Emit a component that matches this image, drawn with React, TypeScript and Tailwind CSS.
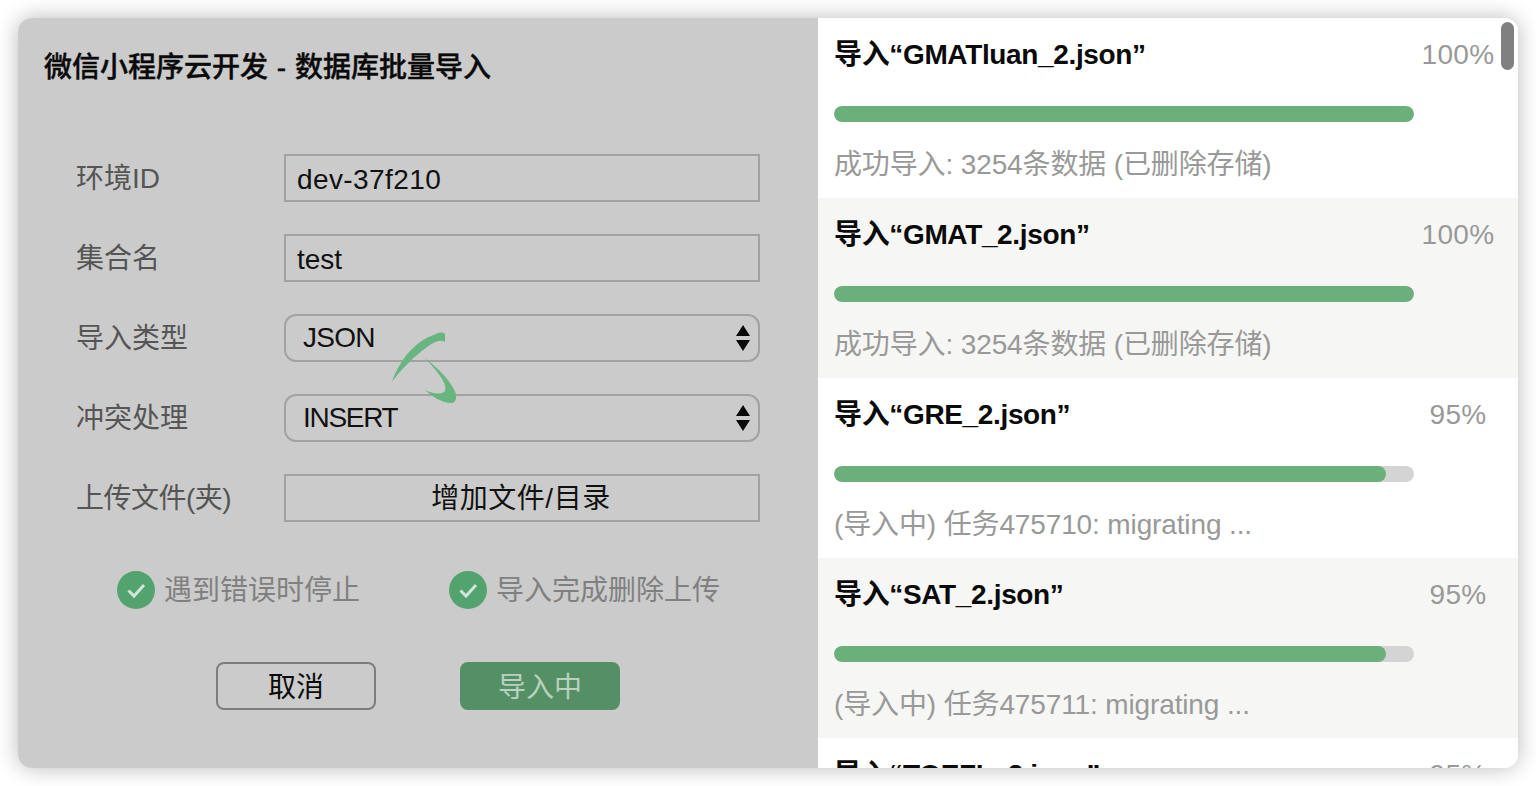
import React from "react";

const font = "font-['Liberation_Sans','Noto_Sans_CJK_SC',sans-serif]";

const rows = [
  { name: "导入“GMATluan_2.json”", pct: 100, sub: "成功导入: 3254条数据 (已删除存储)", alt: false },
  { name: "导入“GMAT_2.json”", pct: 100, sub: "成功导入: 3254条数据 (已删除存储)", alt: true },
  { name: "导入“GRE_2.json”", pct: 95.2, label: "95%", sub: "(导入中) 任务475710: migrating ...", alt: false },
  { name: "导入“SAT_2.json”", pct: 95.2, label: "95%", sub: "(导入中) 任务475711: migrating ...", alt: true },
  { name: "导入“TOEFL_2.json”", pct: 95.2, label: "95%", sub: "(导入中) 任务475712: migrating ...", alt: false },
];

function Label({ children, tight }: { children: React.ReactNode; tight?: boolean }) {
  return (
    <div className={`w-[266px] h-[48px] pl-[58px] text-[28px] leading-[50px] text-[#555555] shrink-0 ${tight ? "tracking-[-0.5px]" : ""}`}>
      {children}
    </div>
  );
}

function Arrows() {
  return (
    <svg width="14" height="26" viewBox="0 0 14 26" className="shrink-0">
      <path d="M7 0 L14 11 L0 11 Z M0 15 L14 15 L7 26 Z" fill="#0a0a0a" />
    </svg>
  );
}

function Check() {
  return (
    <svg width="38" height="38" viewBox="0 0 38 38" className="shrink-0">
      <circle cx="19" cy="19" r="19" fill="#53a36e" />
      <path d="M11.5 19.5 L17 25 L27 14" fill="none" stroke="#d4e4d8" strokeWidth="3" />
    </svg>
  );
}

export default function App() {
  return (
    <div className={`${font} w-[1536px] h-[786px] bg-white p-[18px] overflow-hidden`}>
      <div className="relative flex w-[1500px] h-[750px] rounded-[14px] overflow-hidden shadow-[0_0_22px_rgba(0,0,0,0.28)]">
        <div className="relative w-[800px] shrink-0 bg-[#cbcbcb]">
          <h1 className="pl-[26px] pt-[32px] text-[28px] leading-[36px] font-medium text-[#0a0a0a] [word-spacing:1px] [-webkit-text-stroke:0.4px_#0a0a0a]">
            微信小程序云开发 - 数据库批量导入
          </h1>

          <div className="mt-[68px] flex flex-col gap-[32px]">
            <div className="flex items-center">
              <Label>环境ID</Label>
              <input
                readOnly
                value="dev-37f210"
                className="w-[476px] h-[48px] border-2 border-[#a2a2a2] bg-transparent pl-[11px] pt-[3px] text-[28px] tracking-[0.4px] text-[#111111] outline-none"
              />
            </div>
            <div className="flex items-center">
              <Label>集合名</Label>
              <input
                readOnly
                value="test"
                className="w-[476px] h-[48px] border-2 border-[#a2a2a2] bg-transparent pl-[11px] pt-[3px] text-[28px] text-[#111111] outline-none"
              />
            </div>
            <div className="flex items-center">
              <Label>导入类型</Label>
              <div className="flex items-center justify-between w-[476px] h-[48px] border-2 border-[#a2a2a2] rounded-[12px] pl-[17px] pr-[8px] text-[28px] text-[#111111]">
                <span className="tracking-[-0.7px]">JSON</span>
                <Arrows />
              </div>
            </div>
            <div className="flex items-center">
              <Label>冲突处理</Label>
              <div className="flex items-center justify-between w-[476px] h-[48px] border-2 border-[#a2a2a2] rounded-[12px] pl-[17px] pr-[8px] text-[28px] text-[#111111]">
                <span className="tracking-[-1.3px]">INSERT</span>
                <Arrows />
              </div>
            </div>
            <div className="flex items-center">
              <Label tight>上传文件(夹)</Label>
              <div className="flex items-center justify-center w-[476px] h-[48px] border-2 border-[#a2a2a2] pt-[2px] pr-[2px] text-[28px] tracking-[0.5px] text-[#111111]">
                增加文件/目录
              </div>
            </div>
          </div>

          <div className="mt-[46px] flex pl-[99px]">
            <div className="flex items-center gap-[9px] w-[332px] text-[28px] text-[#808080]">
              <Check />
              <span className="pt-[2px]">遇到错误时停止</span>
            </div>
            <div className="flex items-center gap-[9px] text-[28px] text-[#808080]">
              <Check />
              <span className="pt-[2px]">导入完成删除上传</span>
            </div>
          </div>

          <div className="mt-[50px] flex pl-[198px] gap-[84px]">
            <button className="w-[160px] h-[48px] pt-[3px] rounded-[8px] border-2 border-[#7d7d7d] text-[28px] text-[#0a0a0a]">
              取消
            </button>
            <button className="w-[160px] h-[48px] pt-[3px] rounded-[8px] bg-[#558f66] text-[28px] text-[#b9d2bf]">
              导入中
            </button>
          </div>

          <svg width="72" height="76" viewBox="0 0 72 76" className="absolute left-[372px] top-[314px]">
            <path
              d="M2 50 C8 32 22 10 46 2 C50 0 55 0 55 3 L55 10 C50 7 44 10 37 15 C25 24 10 38 2 50 Z"
              fill="#68b67f"
            />
            <path
              d="M35 26 C48 36 62 50 66 62 C67 68 64 72 60 71 C50 70 42 64 35 58 C43 62 51 63 55 59 C58 52 47 39 35 26 Z"
              fill="#68b67f"
            />
          </svg>
        </div>

        <div className="relative flex-1 overflow-hidden bg-white">
          {rows.map((r) => (
            <div key={r.name} className={`h-[180px] shrink-0 pl-[16px] ${r.alt ? "bg-[#f6f6f4]" : "bg-white"}`}>
              <div className="flex justify-between pt-[19px] pr-[20px]">
                <div className="text-[28px] leading-[36px] font-bold tracking-[-0.35px] text-[#0a0a0a]">{r.name}</div>
                <div className="w-[80px] text-center text-[28px] leading-[36px] tracking-[0.3px] text-[#999999]">{r.label ?? `${r.pct}%`}</div>
              </div>
              <div className="mt-[33px] w-[580px] h-[16px] rounded-full bg-[#d4d4d4] overflow-hidden">
                <div className="h-full rounded-full bg-[#6bb07b]" style={{ width: `${r.pct}%` }} />
              </div>
              <div className="mt-[25px] text-[28px] leading-[36px] tracking-[-0.13px] text-[#999999]">{r.sub}</div>
            </div>
          ))}
          <div className="absolute right-[4px] top-[4px] w-[13px] h-[48px] rounded-full bg-[#808080]" />
        </div>
      </div>
    </div>
  );
}
